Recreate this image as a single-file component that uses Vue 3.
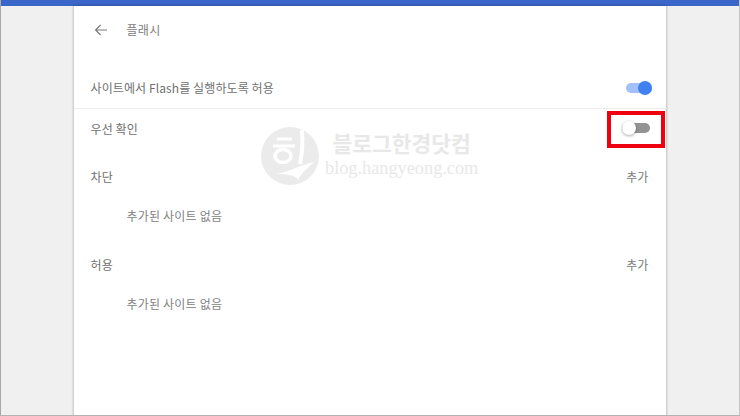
<script setup>
const sections = [
  { title: '차단', action: '추가', empty: '추가된 사이트 없음' },
  { title: '허용', action: '추가', empty: '추가된 사이트 없음' }
]
</script>

<template>
  <div class="page">
    <div class="topbar"></div>
    <div class="body">
      <main class="panel">
        <header class="head">
          <svg class="back" width="16" height="16" viewBox="0 0 16 16" fill="none">
            <path d="M14 8H3M7.6 3 2.6 8l5 5" stroke="#7a7a7a" stroke-width="1.2" />
          </svg>
          <span class="title">플래시</span>
        </header>
        <div class="row first">
          <span>사이트에서 Flash를 실행하도록 허용</span>
          <span class="toggle on"><i></i></span>
        </div>
        <div class="row second">
          <span>우선 확인</span>
          <span class="mark">
            <span class="toggle off"><i></i></span>
          </span>
        </div>
        <section v-for="s in sections" :key="s.title" class="sect">
          <div class="sect-head">
            <span>{{ s.title }}</span>
            <span class="add">{{ s.action }}</span>
          </div>
          <div class="empty">{{ s.empty }}</div>
        </section>
      </main>
    </div>
    <div class="wm">
      <svg width="58" height="58" viewBox="0 0 58 58">
        <circle cx="29" cy="29" r="29" fill="#ebebeb" />
        <path d="M16 12h15M12 19h22" stroke="#fff" stroke-width="3" fill="none" />
        <ellipse cx="22" cy="29" rx="8" ry="6.5" stroke="#fff" stroke-width="3.5" fill="none" />
        <path d="M41 3c1 12 0 24-2 34" stroke="#fff" stroke-width="4" fill="none" />
        <path d="M15 47c10-1 22-8 38-12-6 6-12 10-16 18-2-5-10-6-22-6z" fill="#fff" />
      </svg>
      <div class="wm-text">
        <div class="wm-ko">블로그한경닷컴</div>
        <div class="wm-en">blog.hangyeong.com</div>
      </div>
    </div>
  </div>
</template>

<style scoped>
.page {
  position: relative;
  width: 740px;
  height: 416px;
  box-sizing: border-box;
  display: flex;
  flex-direction: column;
  overflow: hidden;
  background: #f0f0f0;
  border-left: 1px solid #a8a8a8;
  border-right: 1px solid #c4c4c4;
  border-bottom: 1px solid #b4b4b4;
  font-family: "Noto Sans CJK KR", "Liberation Sans", sans-serif;
  font-size: 12px;
  letter-spacing: 0.1px;
  color: #707070;
}
.topbar {
  height: 6px;
  flex: none;
  background: #3b66c9;
}
.body {
  flex: 1;
  display: flex;
  justify-content: center;
}
.panel {
  width: 592px;
  margin-left: -1px;
  background: #fff;
  box-shadow: 0 0 2px 1px rgba(0, 0, 0, 0.2);
}
.head {
  height: 48px;
  display: flex;
  align-items: center;
  padding: 0 0 2px 19px;
  box-sizing: border-box;
  gap: 18px;
}
.back {
  margin-top: 2px;
}
.title {
  font-size: 12px;
  color: #7c7c7c;
  letter-spacing: 0.3px;
}
.row {
  display: flex;
  align-items: center;
  justify-content: space-between;
  padding: 0 14px 0 17px;
}
.first {
  height: 55px;
  padding-top: 13px;
  box-sizing: border-box;
  border-bottom: 1px solid #ececec;
}
.first .toggle {
  margin-top: 1px;
}
.second {
  height: 38px;
  position: relative;
}
.toggle {
  position: relative;
  display: block;
  width: 26px;
  height: 10px;
  border-radius: 5px;
}
.toggle i {
  position: absolute;
  top: -2px;
  width: 14px;
  height: 14px;
  border-radius: 50%;
}
.on {
  background: #a3c0f8;
}
.on i {
  right: 0;
  background: #4080f0;
}
.off {
  width: 28px;
  margin-top: -3px;
  background: #939393;
}
.off i {
  left: 0;
  background: #fff;
  box-shadow: 0 1px 3px rgba(0, 0, 0, 0.35);
}
.mark {
  position: absolute;
  right: 1px;
  top: 2px;
  width: 58px;
  height: 37px;
  padding-left: 11px;
  box-sizing: border-box;
  border: 4px solid #ee0010;
  display: flex;
  align-items: center;
}
.sect {
  padding: 0 17px;
}
.sect-head {
  display: flex;
  justify-content: space-between;
  height: 58px;
  align-items: center;
}
.add {
  color: #7c7c7c;
}
.empty {
  height: 30px;
  padding: 0 0 10px 36px;
  box-sizing: border-box;
  display: flex;
  align-items: center;
  letter-spacing: 0.2px;
  color: #828282;
}
.wm {
  position: absolute;
  left: 260px;
  top: 127px;
  display: flex;
  align-items: center;
  gap: 6px;
  pointer-events: none;
}
.wm-text {
  font-family: "Liberation Serif", "Noto Sans CJK KR", serif;
  color: #e8e8e8;
  text-align: center;
}
.wm-ko {
  font-size: 21.5px;
  font-weight: 700;
  line-height: 24px;
  letter-spacing: 0;
}
.wm-en {
  font-size: 18.3px;
  line-height: 22px;
  letter-spacing: 0;
  white-space: nowrap;
}
</style>
